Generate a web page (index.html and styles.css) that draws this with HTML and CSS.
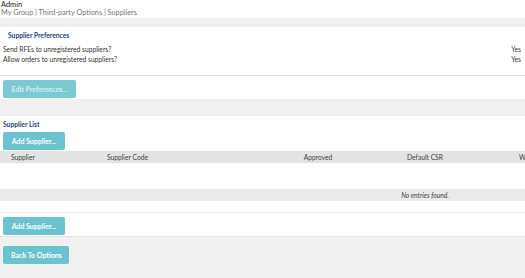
FILE: index.html
```html
<!DOCTYPE html>
<html lang="en">
<head>
  <meta charset="UTF-8">
  <title>Suppliers</title>
  <link rel="stylesheet" href="styles.css">
</head>
<body>

<div class="top">
  <div class="user">Admin</div>
  <div class="crumbs">My Group | Third-party Options | Suppliers</div>
</div>

<div class="page">

  <div class="panel prefs">
    <h3>Supplier Preferences</h3>
    <div class="pref-row"><span>Send RFEs to unregistered suppliers?</span><span>Yes</span></div>
    <div class="pref-row"><span>Allow orders to unregistered suppliers?</span><span>Yes</span></div>
  </div>
  <div class="panel-actions">
    <button class="btn btn-faded">Edit Preferences...</button>
  </div>

  <div class="panel list">
    <h3>Supplier List</h3>
    <button class="btn">Add Supplier...</button>
    <div class="table-wrap">
      <table class="grid">
        <thead>
          <tr>
            <th class="c-name">Supplier</th>
            <th class="c-code">Supplier Code</th>
            <th class="c-appr">Approved</th>
            <th class="c-csr">Default CSR</th>
            <th class="c-web">Website</th>
          </tr>
        </thead>
        <tbody>
          <tr class="spacer"><td colspan="5"></td></tr>
          <tr class="empty"><td colspan="5">No entries found.</td></tr>
          <tr class="spacer-small"><td colspan="5"></td></tr>
        </tbody>
      </table>
    </div>
    <div class="list-foot">
      <button class="btn">Add Supplier...</button>
    </div>
  </div>

  <div class="back">
    <button class="btn">Back To Options</button>
  </div>

</div>

</body>
</html>
```

FILE: styles.css
```css
html, body {
  margin: 0;
  height: 100%;
}

body {
  font-family: Lato, "Open Sans", sans-serif;
  font-size: 6.7px;
  color: #333;
  background: #f0f0f0;
  overflow: hidden;
}

.top {
  background: #fff;
  padding: 0 0 0 1px;
  height: 18px;
  box-sizing: border-box;
}

.user {
  font-size: 7.4px;
  line-height: 9px;
  color: #222;
}

.crumbs {
  font-size: 7.3px;
  line-height: 8px;
  color: #777;
}

.page {
  padding-top: 9px;
  background: #f0f0f0;
}

.panel {
  background: #fff;
}

.panel h3 {
  margin: 0;
  font-size: 6.7px;
  font-weight: bold;
  color: #1f3f7f;
}

.prefs {
  height: 49px;
  padding: 4px 4px 0 3px;
  box-sizing: border-box;
  border-bottom: 1px solid #e4e4e4;
}

.prefs h3 {
  padding-left: 5px;
  line-height: 9px;
  margin-bottom: 4px;
}

.pref-row {
  display: flex;
  justify-content: space-between;
  line-height: 10px;
}

.panel-actions {
  background: #fff;
  height: 23px;
  padding: 4px 0 0 3px;
  box-sizing: border-box;
  margin-bottom: 17px;
}

.btn {
  font-family: Lato, "Open Sans", sans-serif;
  font-size: 7px;
  font-weight: bold;
  color: #fff;
  background: #6bc3cf;
  border: 0;
  border-radius: 2px;
  height: 18px;
  padding: 0 8px;
  white-space: nowrap;
  cursor: pointer;
}

.btn-faded {
  background: #7ac9d3;
  color: #d8eef1;
  width: 73px;
}

.list {
  padding-top: 4px;
  border-bottom: 1px solid #e4e4e4;
}

.list h3 {
  padding-left: 3px;
  line-height: 9px;
  margin-bottom: 3px;
}

.list > .btn {
  margin-left: 3px;
  width: 62px;
}

.table-wrap {
  overflow: hidden;
  margin-top: 1px;
}

.grid {
  border-collapse: collapse;
  width: 850px;
  table-layout: fixed;
  color: #444;
}

.grid th {
  background: #e3e3e3;
  font-weight: normal;
  height: 12px;
  padding: 0;
  line-height: 12px;
  white-space: nowrap;
  overflow: hidden;
}

.c-name { width: 96px; text-align: left; padding-left: 11px !important; }
.c-code { width: 150px; text-align: left; }
.c-appr { width: 122px; text-align: center; }
.c-csr  { width: 92px; text-align: center; }
.c-web  { text-align: left; padding-left: 48px !important; }

.spacer td {
  height: 26px;
  padding: 0;
}

.empty td {
  background: #ebebeb;
  text-align: center;
  font-style: italic;
  height: 12px;
  padding: 0;
  line-height: 12px;
}

.spacer-small td {
  height: 11px;
  padding: 0;
  border-bottom: 1px solid #ececec;
}

.list-foot {
  padding: 4px 0 1px 3px;
}

.list-foot .btn {
  width: 62px;
}

.back {
  padding: 9px 0 0 3px;
}

.back .btn {
  width: 66px;
}
```
